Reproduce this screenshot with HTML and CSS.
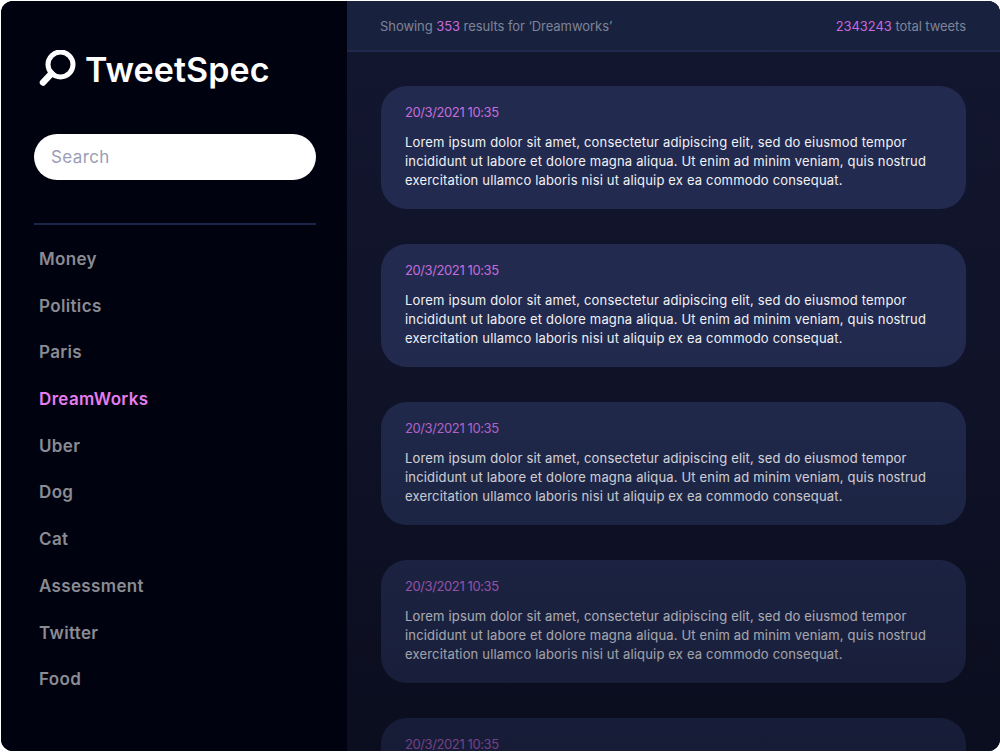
FILE: index.html
```html
<!DOCTYPE html>
<html lang="en">

<head>
    <meta charset="UTF-8">
    <meta name="viewport" content="width=device-width, initial-scale=1.0">
    <title>TweetSpec</title>
    <link rel="stylesheet" href="styles.css">
</head>

<body>

    <div class="app">
        <aside class="sidebar">
            <div class="logo">
                <svg class="logo-icon" width="38" height="38" viewBox="0 0 38 38" fill="none" stroke="#fff" stroke-linecap="round">
                    <circle cx="21.5" cy="14.5" r="12.5" stroke-width="5"/>
                    <path d="M12.5 23.5 L4 32.5" stroke-width="6.5"/>
                </svg>
                <span>TweetSpec</span>
            </div>

            <input class="search" type="text" placeholder="Search">

            <nav class="topics">
                <a href="#">Money</a>
                <a href="#">Politics</a>
                <a href="#">Paris</a>
                <a href="#" class="active">DreamWorks</a>
                <a href="#">Uber</a>
                <a href="#">Dog</a>
                <a href="#">Cat</a>
                <a href="#">Assessment</a>
                <a href="#">Twitter</a>
                <a href="#">Food</a>
            </nav>
        </aside>

        <main class="main">
            <header class="topbar">
                <span>Showing <b>353</b> results for ‘Dreamworks’</span>
                <span><b>2343243</b> total tweets</span>
            </header>

            <section class="tweets">
                <article class="tweet">
                    <time>20/3/2021 10:35</time>
                    <p>Lorem ipsum dolor sit amet, consectetur adipiscing elit, sed do eiusmod tempor<br>incididunt ut labore et dolore magna aliqua. Ut enim ad minim veniam, quis nostrud<br>exercitation ullamco laboris nisi ut aliquip ex ea commodo consequat.</p>
                </article>
                <article class="tweet">
                    <time>20/3/2021 10:35</time>
                    <p>Lorem ipsum dolor sit amet, consectetur adipiscing elit, sed do eiusmod tempor<br>incididunt ut labore et dolore magna aliqua. Ut enim ad minim veniam, quis nostrud<br>exercitation ullamco laboris nisi ut aliquip ex ea commodo consequat.</p>
                </article>
                <article class="tweet">
                    <time>20/3/2021 10:35</time>
                    <p>Lorem ipsum dolor sit amet, consectetur adipiscing elit, sed do eiusmod tempor<br>incididunt ut labore et dolore magna aliqua. Ut enim ad minim veniam, quis nostrud<br>exercitation ullamco laboris nisi ut aliquip ex ea commodo consequat.</p>
                </article>
                <article class="tweet">
                    <time>20/3/2021 10:35</time>
                    <p>Lorem ipsum dolor sit amet, consectetur adipiscing elit, sed do eiusmod tempor<br>incididunt ut labore et dolore magna aliqua. Ut enim ad minim veniam, quis nostrud<br>exercitation ullamco laboris nisi ut aliquip ex ea commodo consequat.</p>
                </article>
                <article class="tweet">
                    <time>20/3/2021 10:35</time>
                </article>
            </section>

            <div class="fade"></div>
        </main>
    </div>

</body>

</html>
```

FILE: styles.css
```css
body {
    font-family: Inter, "Open Sans", sans-serif;
    background-color: #fff;
    margin: 0;
    padding: 0;
}

.app {
    display: flex;
    height: 750px;
    margin: 1px 0 1px 1px;
    border-radius: 12px;
    overflow: hidden;
    background-color: #000210;
}

.sidebar {
    width: 346px;
    flex-shrink: 0;
    box-sizing: border-box;
    padding: 48px 31px 0 33px;
    background-color: #01020f;
}

.logo {
    display: flex;
    align-items: center;
    gap: 8px;
    height: 40px;
    padding-left: 5px;
    color: #fff;
    font-size: 34px;
    font-weight: 600;
    letter-spacing: 0.1px;
}

.logo-icon {
    flex-shrink: 0;
}

.search {
    display: block;
    width: 100%;
    height: 46px;
    box-sizing: border-box;
    margin-top: 45px;
    padding: 0 17px;
    border: none;
    border-radius: 23px;
    background-color: #fff;
    font-family: inherit;
    font-size: 17px;
    letter-spacing: 0.4px;
}

.search::placeholder {
    color: #9a9db8;
    opacity: 1;
}

.topics {
    display: flex;
    flex-direction: column;
    margin-top: 43px;
    padding: 11px 0 0 5px;
    border-top: 2px solid #1c2548;
}

.topics a {
    height: 46.7px;
    line-height: 46.7px;
    color: #8a8b93;
    font-size: 17px;
    font-weight: 600;
    letter-spacing: 0.35px;
    text-decoration: none;
}

.topics a.active {
    color: #e57df0;
}

.main {
    position: relative;
    flex: 1;
    min-width: 0;
    background: linear-gradient(#12162f, #0e1124);
}

.topbar {
    display: flex;
    justify-content: space-between;
    align-items: center;
    height: 49px;
    padding: 0 34px 0 33px;
    background-color: #18223f;
    border-bottom: 2px solid #202a4c;
    color: #7f8498;
    font-size: 13px;
    letter-spacing: -0.06px;
}

.topbar b {
    color: #c868dc;
    font-weight: 400;
}

.tweets {
    display: flex;
    flex-direction: column;
    gap: 35px;
    padding: 34px 34px 0;
}

.tweet {
    height: 123px;
    flex-shrink: 0;
    box-sizing: border-box;
    padding: 17px 24px 0;
    border-radius: 26px;
    background-color: #222b4f;
}

.tweet time {
    display: block;
    height: 19px;
    line-height: 19px;
    color: #c56ddb;
    font-size: 13px;
    letter-spacing: -0.4px;
}

.tweet p {
    margin: 11px 0 0;
    color: #f1f1f5;
    font-size: 13px;
    letter-spacing: 0.17px;
    line-height: 19px;
    white-space: nowrap;
}

/* darkens the list towards the bottom of the window */
.fade {
    position: absolute;
    left: 0;
    right: 0;
    top: 51px;
    bottom: 0;
    background: linear-gradient(rgba(8, 10, 24, 0) 40%, rgba(8, 10, 24, 0.45));
    pointer-events: none;
}
```
